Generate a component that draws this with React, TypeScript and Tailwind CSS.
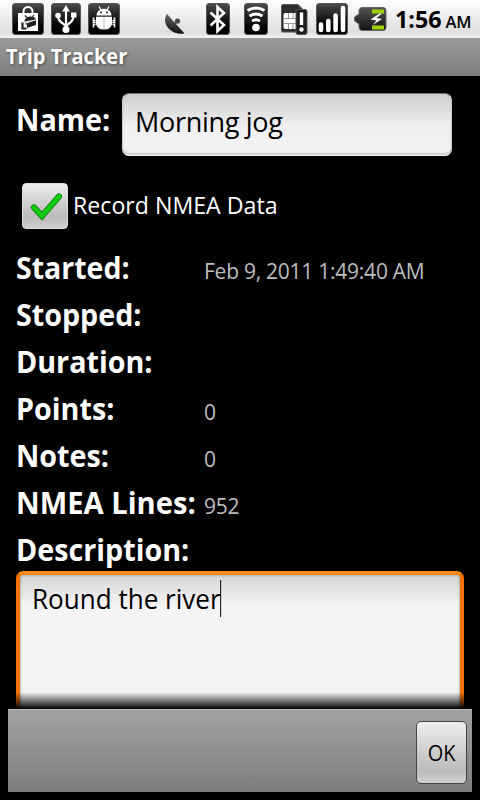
import type { ReactNode } from "react";

const details = [
  { label: "Started:", value: "Feb 9, 2011 1:49:40 AM", fit: "scale-x-[0.95]" },
  { label: "Stopped:", value: "", fit: "scale-x-[0.955]" },
  { label: "Duration:", value: "", fit: "scale-x-[0.957]" },
  { label: "Points:", value: "0", fit: "scale-x-[0.957]" },
  { label: "Notes:", value: "0", fit: "scale-x-[0.957]" },
  { label: "NMEA Lines:", value: "952", fit: "scale-x-[0.972]" },
  { label: "Description:", value: "", fit: "scale-x-[0.957]" }
];

function Tile({ className, viewBox, children }: { className: string; viewBox: string; children: ReactNode }) {
  return (
    <svg
      viewBox={viewBox}
      className={`h-8 shrink-0 rounded-[3px] border border-[#555] bg-linear-to-b from-[#4a4a4a] to-black ${className}`}
    >
      {children}
    </svg>
  );
}

function StatusBar() {
  return (
    <header className="flex h-[38px] bg-linear-to-b from-white via-[#dedede] via-85% to-[#f2f2f2] pt-[3px]">
      {/* Market bag */}
      <Tile className="ml-3 w-8" viewBox="0 0 30 30">
        <path d="M10.500 10V7.500a4.500 4.500 0 0 1 9 0V10" fill="none" stroke="#fff" strokeWidth="2" />
        <path d="M5 9h20v18H5z" fill="#fff" />
        <path d="M11.500 17.500c0-5 9-7 11.500-2zM11 19l12-3.500v5.500l-9 3v-3z" fill="#222" />
        <path d="M12 11.500l2 2M21 11l-1.500 2" stroke="#222" strokeWidth="1.200" />
        <path d="M9.500 18.500v6h4" fill="none" stroke="#222" strokeWidth="2.200" />
        <path d="M11 19.700l12-4" stroke="#fff" strokeWidth="1" />
      </Tile>
      {/* USB */}
      <Tile className="ml-[7px] w-[30px]" viewBox="0 0 28 30">
        <path
          d="M14 26V5M14 22.500C12.500 19 6 19 6 12M14 22.500C15.500 19 21.500 19 21.500 12"
          fill="none"
          stroke="#fff"
          strokeWidth="2.200"
        />
        <path d="M14 1l3.800 6.500h-7.600zM19 8.500h5.500v5H19z" fill="#fff" />
        <circle cx="6" cy="11.500" r="2.800" fill="#fff" />
        <circle cx="14" cy="25.500" r="3.500" fill="#fff" />
      </Tile>
      {/* USB debugging */}
      <Tile className="ml-[7px] w-8" viewBox="0 0 30 30">
        <path d="M7.500 11.500C8 2.500 22 2.500 22.500 11.500z" fill="#fff" />
        <path d="M10 2.500l2 3.500M20 2.500l-2 3.500" stroke="#fff" strokeWidth="1.200" />
        <path d="M7 12.800h16V20q-1 5.500-8 5.500T7 20z" fill="#fff" />
        <path d="M15 13v12.500" stroke="#bbb" />
        <path
          d="M6.500 16.800h-2V13.500M6.500 18.500h-3M6.500 20.500h-2v3M23.500 16.800h2V13.500M23.500 18.500h3M23.500 20.500h2v3"
          fill="none"
          stroke="#fff"
          strokeWidth="1.600"
        />
        <circle cx="12" cy="8.500" r="1" fill="#222" />
        <circle cx="18" cy="8.500" r="1" fill="#222" />
      </Tile>
      {/* GPS dish */}
      <svg viewBox="0 0 22 24" className="mt-[9px] ml-11 h-6 w-[22px] shrink-0">
        <defs>
          <linearGradient id="dish" x2="0" y2="1">
            <stop stopColor="#666" />
            <stop offset="1" stopColor="#111" />
          </linearGradient>
        </defs>
        <path d="M3 2l17.500 19.500C9 24-4 13 3 2z" fill="url(#dish)" />
        <path d="M11 12L14 8.500" stroke="#444" strokeWidth="1.500" />
        <circle cx="13.500" cy="9" r="2.600" fill="#444" />
      </svg>
      {/* Bluetooth */}
      <Tile className="ml-5 w-6" viewBox="0 0 22 30">
        <path d="M3.500 8.500L17 21l-6.500 6V3L17 9 3.500 21.500" fill="none" stroke="#fff" strokeWidth="2.600" />
      </Tile>
      {/* Wi-Fi */}
      <Tile className="ml-[14px] w-6" viewBox="0 0 22 30">
        <path
          d="M2.500 6.500q8.500-5 17 0M4.500 12q6.500-4 13 0M7 17q4-2.500 8 0"
          fill="none"
          stroke="#fff"
          strokeWidth="3"
        />
        <circle cx="11" cy="23.500" r="3.800" fill="#fff" />
      </Tile>
      {/* Missing SIM */}
      <svg viewBox="0 0 27 32" className="ml-[13px] h-8 w-[27px] shrink-0">
        <path d="M2 1.500H17l6 6V29H2q-1.500 0-1.500-1.500V3q0-1.500 1.500-1.500z" fill="#2d2d2d" stroke="#555" />
        <rect x="2.500" y="10" width="14" height="16" rx="2" fill="#fff" />
        <path d="M2.500 15.500h14M2.500 20.500h14M7.500 10v5.500M12 10v5.500M7.500 20.500V26M12 20.500V26" stroke="#999" />
        <rect x="15" y="6.500" width="11" height="25" rx="2" fill="#1c1c1c" stroke="#555" />
        <path d="M20.500 9.500V22" stroke="#fff" strokeWidth="3.400" />
        <circle cx="20.500" cy="26.500" r="2.200" fill="#fff" />
      </svg>
      {/* Signal */}
      <Tile className="ml-2 w-8" viewBox="0 0 30 30">
        <path d="M4 20.500V26M11.300 17v9M18.600 11.500V26M26 4v22" stroke="#fff" strokeWidth="4.600" strokeLinecap="round" />
      </Tile>
      {/* Battery */}
      <svg viewBox="0 0 33 25" className="mt-1 ml-[6px] h-[25px] w-[33px] shrink-0">
        <defs>
          <linearGradient id="battery" x2="0" y2="1">
            <stop stopColor="#555" />
            <stop offset="1" stopColor="#111" />
          </linearGradient>
        </defs>
        <path
          d="M8 .5h21q3 0 3 3v17q0 3-3 3H8q-2.500 0-3-3V17L.5 14v-4l4.500-3V3.500Q5.500 .5 8 .500z"
          fill="url(#battery)"
          stroke="#666"
        />
        <path d="M18 2.500h12v4H18zM18 18.500h12v4H18z" fill="#9bd400" />
        <path d="M25.500 6.500L16.500 12.500l6 1-4 4.500 9.500-6-5.500-1L28 6.500z" fill="#fff" />
      </svg>
      <span className="ml-2 flex origin-left scale-x-[0.97] items-baseline text-2xl leading-[32px] font-bold whitespace-nowrap text-black">
        1:56<span className="ml-1 text-[17px] font-semibold">AM</span>
      </span>
    </header>
  );
}

export default function App() {
  return (
    <div className="flex h-[800px] w-[480px] flex-col overflow-hidden bg-black font-['Open_Sans',sans-serif] text-white">
      <StatusBar />
      <h1 className="h-[38px] bg-linear-to-b from-[#9a9a9a] to-[#7d807d] pl-1.5 text-[21px] leading-[37px] font-bold [text-shadow:1px_1px_3px_#444]">
        <span className="inline-block origin-left scale-x-[0.955]">Trip Tracker</span>
      </h1>

      <main className="flex h-[633px] flex-col overflow-hidden px-4 pt-[17px]">
        <div className="flex h-[63px]">
          <label htmlFor="tripName" className="w-[106px] text-[30px] leading-[54px] font-bold">
            <span className="inline-block origin-left scale-x-[0.96]">Name:</span>
          </label>
          <input
            id="tripName"
            defaultValue="Morning jog"
            className="h-[63px] w-[330px] rounded-[7px] border border-t-[#777] border-r-[#ccc] border-b-white border-l-[#ccc] bg-linear-to-b from-[#cfcfcf] via-[#f0f0f0] via-55% to-[#f4f4f4] px-3 pb-[7px] text-[27px] tracking-[-0.3px] text-black shadow-[inset_0_-2px_2px_#ccc] outline-none"
          />
        </div>

        <label className="mt-[27px] flex h-[46px] pl-1.5 text-2xl leading-[44px]">
          <span className="mr-[5px] flex size-[46px] items-center justify-center rounded-[4px] border border-[#ddd] bg-linear-to-b from-[#eee] via-[#bababa] via-75% to-[#d0d0d0]">
            <svg viewBox="0 0 34 30" className="h-[30px] w-[34px]">
              <path d="M6 16.500l8 8.500L31 5.500" fill="none" stroke="#087a08" strokeWidth="6.200" strokeLinecap="round" />
              <path d="M6 16.500l8 8.500L31 5.500" fill="none" stroke="#12cb12" strokeWidth="4.500" strokeLinecap="round" />
            </svg>
          </span>
          <span className="origin-left scale-x-[0.965] whitespace-nowrap">Record NMEA Data</span>
        </label>

        <dl className="mt-[15px] h-[327px] shrink-0">
          {details.map(({ label, value, fit }) => (
            <div key={label} className="flex h-[47px] items-baseline leading-[47px] whitespace-nowrap">
              <dt className="w-[188px] text-[30px] font-bold">
                <span className={`inline-block origin-left ${fit}`}>{label}</span>
              </dt>
              <dd className="text-[21px] tracking-[-0.25px] text-[#bdbdbd]">{value}</dd>
            </div>
          ))}
        </dl>

        <div className="relative -mx-4 h-[138px] px-4">
          <div className="h-[160px] rounded-[7px] border-4 border-[#f57200] border-t-[#ff8a20] bg-linear-to-b from-[#d5d5d5] via-[#f5f4f5] via-20% to-[#f5f4f5] px-3 pt-[5px] text-[27px] leading-[37px] text-black shadow-[inset_0_0_3px_#888]">
            <span className="inline-block h-[37px] origin-left scale-x-[0.965] border-r border-black">
              Round the river
            </span>
          </div>
          <div className="absolute bottom-0 left-0 h-[17px] w-full bg-linear-to-b from-transparent to-black" />
        </div>
      </main>

      <footer className="mx-2 flex h-[83px] justify-end border-t border-[#bbb] bg-linear-to-b from-[#a2a2a2] to-[#7c7e7c] pt-[11px] pr-[5px]">
        <button className="h-[63px] w-[51px] rounded-[5px] border border-[#444] bg-linear-to-b from-[#eee] via-[#bbb] via-80% to-[#d0d0d0] pt-0.5 text-[21px] text-black">
          <span className="inline-block scale-x-[0.95]">OK</span>
        </button>
      </footer>
    </div>
  );
}
